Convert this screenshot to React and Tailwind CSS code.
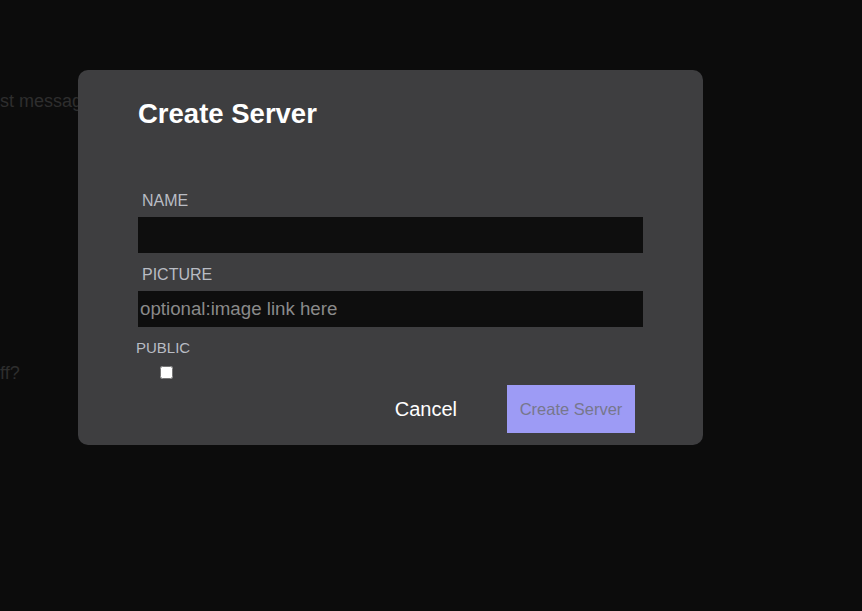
export default function App() {
  return (
    <div className="relative h-[611px] w-full overflow-hidden bg-[#0c0c0c] font-['Liberation_Sans',Arial,sans-serif]">
      {/* page behind the overlay */}
      <div className="flex flex-col pt-[91px] text-[18px] leading-[21px] text-[#2e2e2e]">
        <p>st message</p>
        <p className="mt-[251px]">ff?</p>
      </div>

      {/* modal */}
      <div className="absolute left-[78px] top-[70px] flex h-[375px] w-[625px] flex-col rounded-[10px] bg-[#3e3e40] pl-[60px] pr-[60px] pt-[28px]">
        <h2 className="text-[27.5px] font-bold leading-[32px] text-white">Create Server</h2>

        <label className="mt-[62px] pl-[4px] text-[16px] leading-[18px] text-[#b9bcc4]">NAME</label>
        <input className="mt-[7px] h-[36px] w-full bg-[#0e0e0e] px-[2px] text-[18.7px] text-white outline-none" />

        <label className="mt-[13px] pl-[4px] text-[16px] leading-[18px] text-[#b9bcc4]">PICTURE</label>
        <input
          placeholder="optional:image link here"
          className="mt-[7px] h-[36px] w-full bg-[#0e0e0e] px-[2px] text-[18.7px] text-white outline-none placeholder:text-[#8a8a8a]"
        />

        <label className="mt-[12px] -ml-[2px] text-[15px] leading-[17px] text-[#b9bcc4]">PUBLIC</label>
        <input type="checkbox" className="ml-[22px] mt-[10px] h-[13px] w-[13px]" />

        <div className="mt-[6px] flex items-center justify-end gap-[50px] pr-[8px]">
          <button className="h-[48px] text-[20px] text-white">Cancel</button>
          <button className="h-[48px] w-[128px] bg-[#9d9bf5] text-[16.5px] text-[#77778c]">Create Server</button>
        </div>
      </div>
    </div>
  );
}
